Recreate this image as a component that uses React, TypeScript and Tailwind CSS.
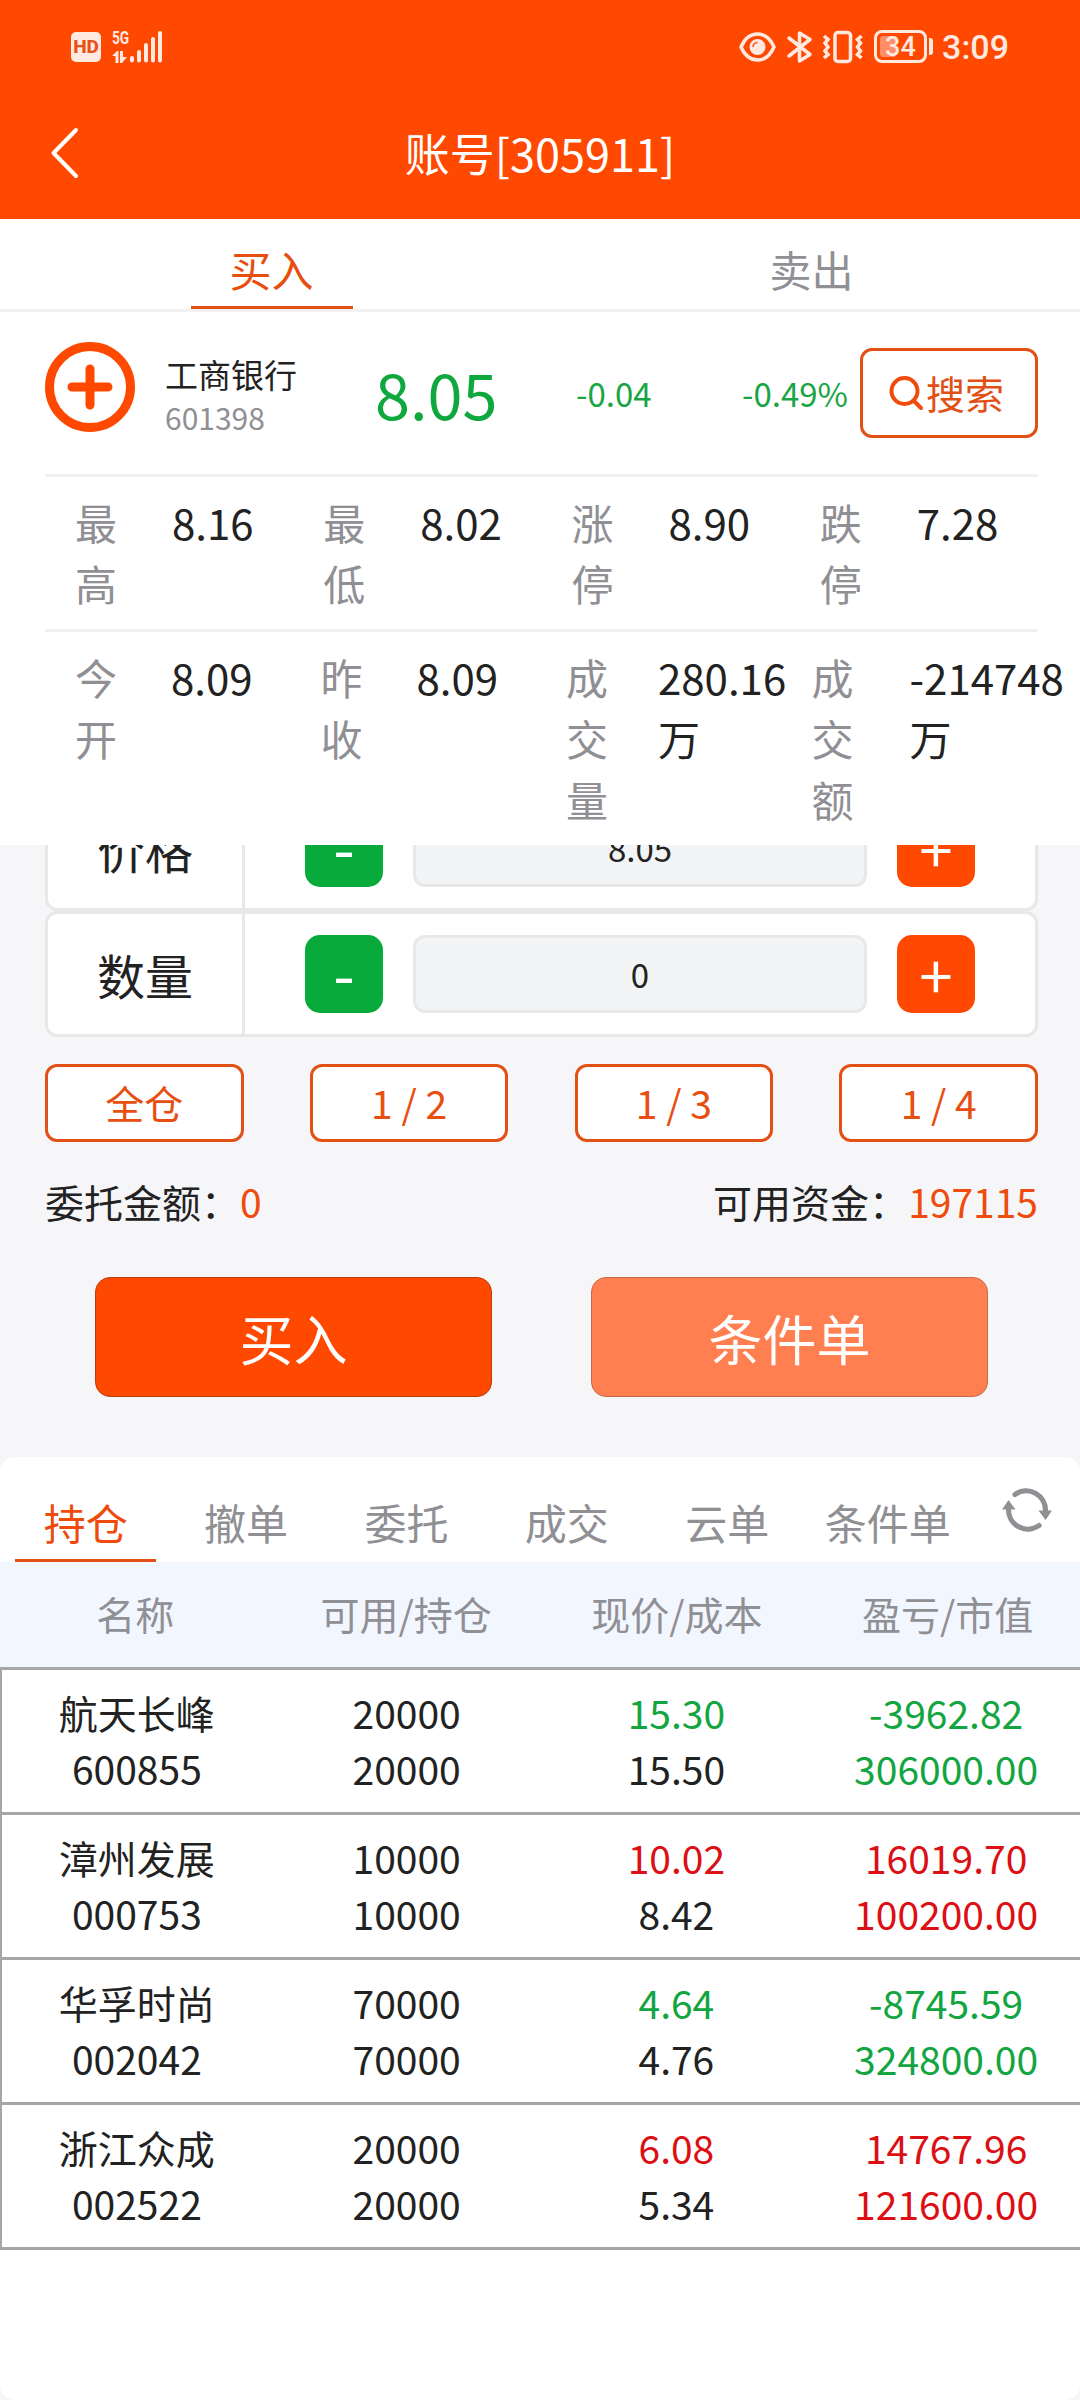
import { useState } from "react"

const ratios: string[] = ["全仓", "1 / 2", "1 / 3", "1 / 4"]

const tabs: string[] = ["持仓", "撤单", "委托", "成交", "云单", "条件单"]

const columns: string[] = ["名称", "可用/持仓", "现价/成本", "盈亏/市值"]

const holdings = [
    { name: "航天长峰", code: "600855", usable: "20000", total: "20000", price: "15.30", cost: "15.50", profit: "-3962.82", value: "306000.00" },
    { name: "漳州发展", code: "000753", usable: "10000", total: "10000", price: "10.02", cost: "8.42", profit: "16019.70", value: "100200.00" },
    { name: "华孚时尚", code: "002042", usable: "70000", total: "70000", price: "4.64", cost: "4.76", profit: "-8745.59", value: "324800.00" },
    { name: "浙江众成", code: "002522", usable: "20000", total: "20000", price: "6.08", cost: "5.34", profit: "14767.96", value: "121600.00" },
]

function StatusBar() {
    return (
        <div className="flex h-[92px] items-center justify-between pl-[71px] pr-[71px] pt-[1px] text-[#ffe9e0]">
            <div className="flex items-center">
                <div className="flex h-[30px] w-[30px] items-center justify-center rounded-[5px] bg-[#ffe9e0] font-['Roboto',sans-serif] text-[19px] font-extrabold leading-none text-[#e8501a]">HD</div>
                <div className="ml-[11px] flex h-[32px] w-[17px] flex-col justify-between">
                    <span className="h-[14px] origin-left scale-x-[0.72] whitespace-nowrap font-['Roboto',sans-serif] text-[19px] font-bold leading-[14px]">5G</span>
                    <svg width="16" height="12" viewBox="0 0 16 12" fill="currentColor">
                        <path d="M0 5 L5 0 H6.500 V12 H3.500 V5 Z M8 0 H11 V6 H15 L10 12 H8 Z" />
                    </svg>
                </div>
                <svg className="ml-px" width="32" height="32" viewBox="0 0 32 32" stroke="currentColor" strokeWidth="4" strokeLinecap="round">
                    <path d="M2 27V29.500M9 21V29.500M16 14V29.500M23 8V29.500M30 2V29.500" />
                </svg>
            </div>
            <div className="flex items-center">
                <svg width="37" height="32" viewBox="0 0 37 32" fill="none" stroke="currentColor" strokeWidth="3.500">
                    <path d="M2 16C5.500 8 11.500 3 18.500 3S31.500 8 35 16C31.500 24 25.500 29 18.500 29S5.500 24 2 16Z" />
                    <circle cx="18.500" cy="16" r="7" fill="currentColor" strokeWidth="2" />
                    <path d="M14 16A4.500 4.500 0 0 1 18.500 11.500" stroke="#ff4800" strokeWidth="1.500" />
                </svg>
                <svg className="ml-[11px]" width="26" height="34" viewBox="0 0 26 34" fill="none" stroke="currentColor" strokeWidth="3.500" strokeLinejoin="round" strokeLinecap="round">
                    <path d="M2 8L23 24.500L12.500 31V3L23 9.500L2 26" />
                </svg>
                <svg className="ml-[9px]" width="42" height="34" viewBox="0 0 42 34" fill="none" stroke="currentColor" strokeWidth="3.500">
                    <rect x="13" y="2.500" width="15.500" height="29" rx="3" />
                    <path d="M2 6L6 9.500L3 13L6 17L3 21L6 24.500L2 28M39.500 6L35.500 9.500L38.500 13L35.500 17L38.500 21L35.500 24.500L39.500 28" strokeWidth="3.500" />
                </svg>
                <div className="ml-[10px] flex items-center">
                    <div className="flex h-[33px] w-[53px] rounded-[8px] border-[3px] border-[#ffe9e0] p-[3px]">
                        <div className="h-full w-[15px] rounded-l-[3px] bg-[#ff8d65]"></div>
                        <span className="-ml-[10px] font-['Roboto',sans-serif] text-[27px] font-medium leading-[22px]">34</span>
                    </div>
                    <div className="ml-[2px] h-[17px] w-[4px] rounded-r-[3px] bg-[#ffe9e0]"></div>
                </div>
                <span className="ml-[9px] font-['Roboto',sans-serif] text-[34px] font-medium leading-none">3:09</span>
            </div>
        </div>
    )
}

function Quote({ label, lines, gap }: { label: string, lines: string[], gap: string }) {
    return (
        <div className="ml-[30px] flex items-start">
            <div className="w-[42px] shrink-0 break-all text-[#8f8f94]">{label}</div>
            <div className={"whitespace-nowrap " + gap}>
                {lines.map((line) => <div key={line}>{line}</div>)}
            </div>
        </div>
    )
}

function Stepper({ label, value }: { label: string, value: string }) {
    return (
        <div className="flex h-[126px] items-center rounded-[12px] border-[3px] border-[#e8e8e8] bg-white">
            <div className="flex h-full w-[197px] items-center justify-center border-r-[3px] border-[#e8e8e8] text-[48px]">{label}</div>
            <button className="ml-[60px] h-[78px] w-[78px] rounded-[15px] bg-[#07aa3b] pb-[5px] text-[62px] leading-[73px] text-white">-</button>
            <div className="ml-[30px] flex h-[78px] w-[454px] items-center justify-center rounded-[12px] border-[3px] border-[#e8e8e8] bg-[#f3f4f6] pt-px text-[33px]">{value}</div>
            <button className="ml-[30px] h-[78px] w-[78px] rounded-[15px] bg-[#ff4800] pb-[2px] text-[60px] leading-[76px] text-white">+</button>
        </div>
    )
}

function App() {

    const [tab, setTab] = useState<string>("持仓")

    return (
        <div className="h-[2400px] w-[1080px] overflow-hidden bg-[#f6f6f9] font-['Noto_Sans_CJK_SC',sans-serif] leading-normal text-[#222222]">
            <div className="h-[219px] bg-[#ff4800] text-white">
                <StatusBar />
                <div className="flex h-[122px] items-center pl-[50px] pr-[79px]">
                    <svg width="29" height="52" viewBox="0 0 29 52" fill="none" stroke="currentColor" strokeWidth="4" strokeLinecap="round" strokeLinejoin="round">
                        <path d="M26 3L3.500 26L26 49" />
                    </svg>
                    <div className="flex-1 pb-px text-center text-[45px]">账号[305911]</div>
                </div>
            </div>

            <div className="h-[626px] bg-white">
                <div className="grid h-[93px] grid-cols-2 justify-items-center border-b-[3px] border-[#f1f1f2] pl-[2px] text-[42px]">
                    <div className="flex w-[162px] items-center justify-center border-b-[3px] border-[#e25015] pt-[12px] text-[#e84e10]">买入</div>
                    <div className="flex w-[162px] items-center justify-center border-b-[3px] border-transparent pl-[2px] pt-[12px] text-[#8f8f94]">卖出</div>
                </div>

                <div className="ml-[45px] mr-[42px] flex h-[165px] items-start border-b-[3px] border-[#f1f1f2]">
                    <svg className="mt-[30px]" width="90" height="90" viewBox="0 0 90 90" fill="none" stroke="#ff4800" strokeWidth="9" strokeLinecap="round">
                        <circle cx="45" cy="45" r="40.500" />
                        <path d="M27 45H63M45 27V63" />
                    </svg>
                    <div className="ml-[30px] mt-[38px] w-[210px]">
                        <div className="text-[33px] leading-[48px]">工商银行</div>
                        <div className="text-[30px] leading-[38px] text-[#8f8f94]">601398</div>
                    </div>
                    <div className="mt-[35px] w-[201px] text-[63px] leading-[92px] text-[#0ea83f]">8.05</div>
                    <div className="mt-[57px] w-[166px] text-[33px] leading-[48px] text-[#1aa545]">-0.04</div>
                    <div className="mt-[57px] w-[118px] text-[33px] leading-[48px] text-[#1aa545]">-0.49%</div>
                    <button className="mt-[36px] flex h-[90px] w-[178px] shrink-0 items-center rounded-[12px] border-[3px] border-[#e25015] pl-[26px] text-[39px] leading-[60px] text-[#e25015]">
                        <svg width="36" height="36" viewBox="0 0 36 36" fill="none" stroke="#ee4b0c" strokeWidth="4" strokeLinecap="round">
                            <circle cx="15.500" cy="16" r="13" />
                            <path d="M25 26L32 33" />
                        </svg>
                        <span className="-mt-[2px] ml-px">搜索</span>
                    </button>
                </div>

                <div className="ml-[45px] mr-[42px] grid h-[155px] grid-cols-4 border-b-[3px] border-[#f1f1f2] pt-[14px] text-[42px] leading-[61px]">
                    <Quote label="最高" lines={["8.16"]} gap="ml-[55px]" />
                    <Quote label="最低" lines={["8.02"]} gap="ml-[55px]" />
                    <Quote label="涨停" lines={["8.90"]} gap="ml-[55px]" />
                    <Quote label="跌停" lines={["7.28"]} gap="ml-[55px]" />
                </div>

                <div className="ml-[45px] grid w-[982px] grid-cols-4 pt-[14px] text-[42px] leading-[61px]">
                    <Quote label="今开" lines={["8.09"]} gap="ml-[54px]" />
                    <Quote label="昨收" lines={["8.09"]} gap="ml-[54px]" />
                    <Quote label="成交量" lines={["280.16", "万"]} gap="ml-[50px]" />
                    <Quote label="成交额" lines={["-214748", "万"]} gap="ml-[56px]" />
                </div>
            </div>

            {/* the form is scrolled a little under the quote panel */}
            <div className="h-[612px] overflow-hidden pl-[45px] pr-[42px]">
                <div className="-mt-[60px]">
                    <Stepper label="价格" value="8.05" />
                    <Stepper label="数量" value="0" />
                </div>

                <div className="mt-[27px] flex justify-between">
                    {ratios.map((ratio) => (
                        <button key={ratio} className="h-[78px] w-[198.600px] rounded-[12px] border-[3px] border-[#e25015] bg-white pb-[2px] text-[39px] leading-[70px] text-[#e84e10]">{ratio}</button>
                    ))}
                </div>

                <div className="mt-[31px] flex justify-between text-[39px] leading-[56px]">
                    <div>委托金额：<span className="text-[#ee4b0c]">0</span></div>
                    <div>可用资金：<span className="text-[#ee4b0c]">197115</span></div>
                </div>

                <div className="mt-[48px] flex justify-between pl-[50px] pr-[50px] text-[54px] text-white">
                    <button className="h-[120px] w-[397px] rounded-[15px] border border-[#b83e10] bg-[#ff4800] pt-px">买入</button>
                    <button className="h-[120px] w-[397px] rounded-[15px] border border-[#c4694a] bg-[#ff7f50] pt-px">条件单</button>
                </div>
            </div>

            <div className="h-[943px] overflow-hidden rounded-[15px] bg-white">
                <div className="flex h-[105px] pl-[5px] text-[42px] text-[#8f8f94]">
                    {tabs.map((name) => (
                        <div key={name} className="flex w-[160.400px] justify-center" onClick={() => setTab(name)}>
                            <div className={"flex w-[141px] items-end justify-center whitespace-nowrap border-b-[3px] pb-[7px] pl-px leading-[61px] " + (tab === name ? "border-[#e25015] text-[#ee4b0c]" : "border-transparent")}>{name}</div>
                        </div>
                    ))}
                    <svg className="ml-[34px] mt-[31px]" width="52" height="44" viewBox="0 0 52 44" fill="none" stroke="#909094" strokeWidth="5.200" strokeLinecap="round">
                        <path d="M14 6.500A19.300 19.300 0 0 1 44.500 23" />
                        <path d="M38 37.500A19.300 19.300 0 0 1 7.500 21" />
                        <path d="M37.500 22.500H51L44.500 32Z M1 21.500H14.500L7.500 12Z" fill="#909094" stroke="none" />
                    </svg>
                </div>
                <div className="grid h-[105px] w-[1083px] grid-cols-4 items-center bg-[#f2f6ff] pb-[2px] text-center text-[39px] text-[#8f8f94]">
                    {columns.map((column) => <div key={column}>{column}</div>)}
                </div>
                <div className="w-[1082px] border-l-2 border-t-[3px] border-[#a6a6a9]">
                    {holdings.map((item) => {
                        const down = item.profit.startsWith("-")
                        const color = down ? "text-[#12a541]" : "text-[#dc0f14]"
                        return (
                            <div key={item.code} className="grid h-[145px] grid-cols-4 border-b-[3px] border-[#a6a6a9] pr-px pt-[14px] text-center text-[39px] leading-[56px]">
                                <div>{item.name}<br />{item.code}</div>
                                <div>{item.usable}<br />{item.total}</div>
                                <div><span className={color}>{item.price}</span><br />{item.cost}</div>
                                <div className={color}>{item.profit}<br />{item.value}</div>
                            </div>
                        )
                    })}
                </div>
            </div>
        </div>
    )
}

export default App
